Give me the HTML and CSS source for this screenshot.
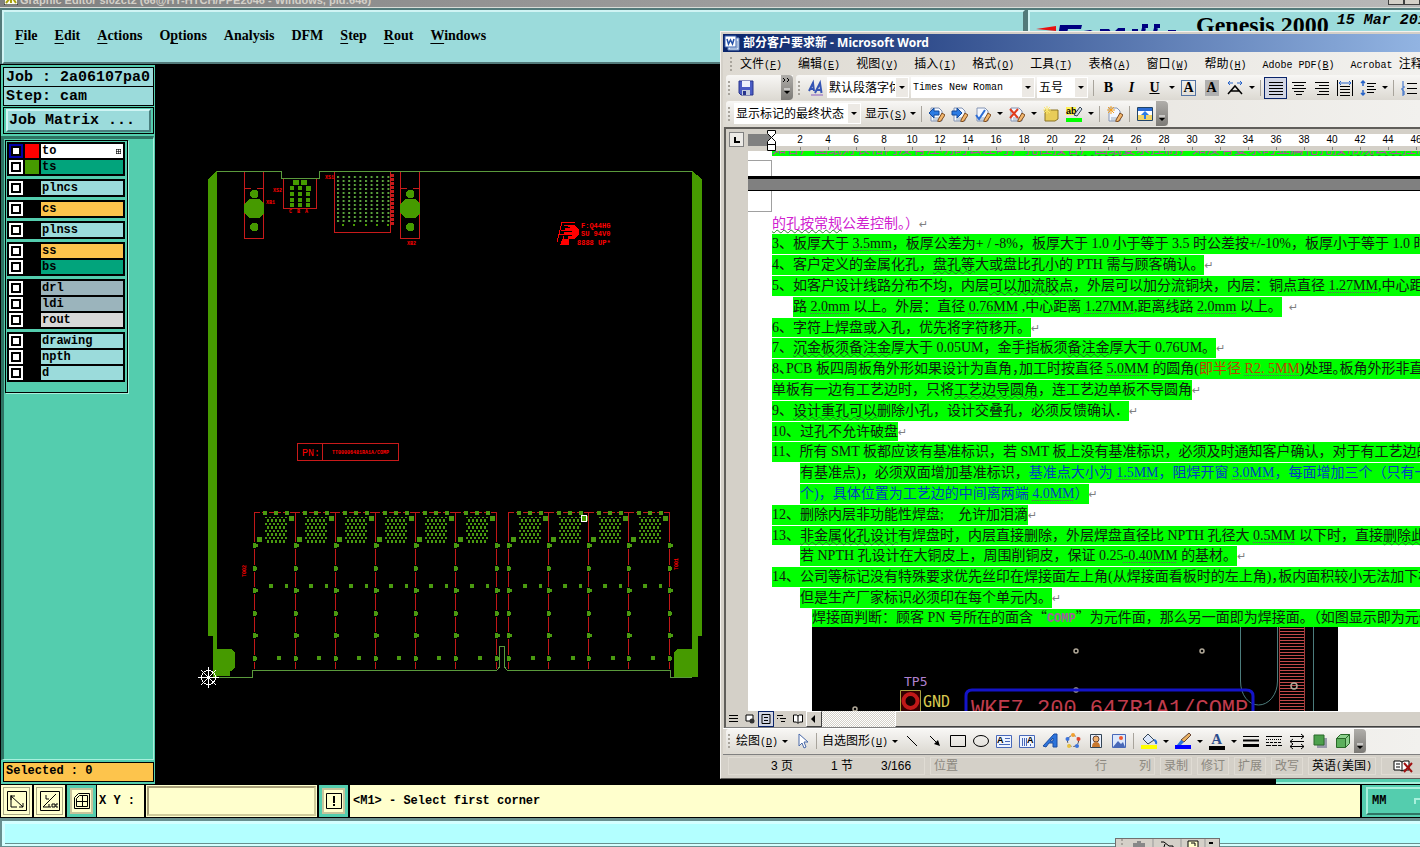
FILE: index.html
```
<!DOCTYPE html>
<html lang="zh-CN">
<head>
  <meta charset="UTF-8">
  <title>Graphic Editor</title>
  <link rel="stylesheet" href="styles.css">
</head>
<body>
  <!-- shared icon shapes -->
  <svg class="defs" aria-hidden="true">
    <defs>
      <symbol id="i-page" viewBox="0 0 16 16">
        <path d="M2 2h8l3 3v10H2z" fill="#f4f8ff" stroke="#8494b4"/>
        <path d="M4 12h6M4 14h6" stroke="#9ab"/>
        <path d="M9 14l4-7 3 2-4 6-3 1z" fill="#f2b66c" stroke="#7b4a1e"/>
      </symbol>
      <symbol id="i-lines" viewBox="0 0 16 16">
        <path d="M1 2.5h14M1 5.5h14M1 8.5h14M1 11.5h14M1 14.5h14" stroke="#000"/>
      </symbol>
      <symbol id="rail" viewBox="0 0 8 160" overflow="visible">
        <path d="M4 0v157" stroke="#c01818"/>
        <path d="M4 30v7M4 53v7M4 75v7M4 98v7M4 120v7M4 143v7" stroke="#000" stroke-width="3"/>
        <path d="M2 33.500h5M2 56.500h4M2 78.500h5M2 101.500h4M2 123.500h5M2 146.500h4" stroke="#4a9a10" stroke-width="3"/>
        <path d="M4 31v5M4 54v5M4 76v5M4 99v5M4 121v5M4 144v5" stroke="#4a9a10" stroke-width="3"/>
      </symbol>
      <pattern id="balls" width="4" height="7" patternUnits="userSpaceOnUse">
        <path d="M0 0h2v3H0zM2 4h2v2H2z" fill="#4a9a10"/>
      </pattern>
      <symbol id="cell" viewBox="0 0 40 160" overflow="visible">
        <path d="M0 .5h40" stroke="#c01818" stroke-dasharray="5 2"/>
        <path d="M8 1h4M19 1h4M30 1h4" stroke="#4a9a10" stroke-width="4"/>
        <path d="M10 5h22v27H10z" fill="url(#balls)"/>
        <path d="M34 6.500h5M2 27h5" stroke="#4a9a10" stroke-width="5"/>
        <path d="M14 74h4M30 74h3M22 146h4" stroke="#4a9a10" stroke-width="4"/>
      </symbol>
      <pattern id="pins" x="337" y="176" width="5.6" height="4" patternUnits="userSpaceOnUse">
        <path d="M0 0h2v2H0z" fill="#5aa33c"/>
      </pattern>
      <pattern id="hatch" width="4" height="3" patternUnits="userSpaceOnUse">
        <path d="M0 0h4v1H0z" fill="#c04a4a"/>
      </pattern>
    </defs>
  </svg>

  <div class="titlebar">
    <svg class="app-icon" viewBox="0 0 14 14"><path d="M0 0h14v14H0z" fill="#fffff0" stroke="#000"/><path d="M2 12l5-6-4-3M12 12L8 6l4-4M7 7v5" stroke="#a8a010" stroke-width="2" fill="none"/></svg>
    <span class="titlebar-text">Graphic Editor sl02ct2 (66@HY-HTCH/PPE2046 - Windows, pid:646)</span>
    <div class="win-btns"><button aria-label="Minimize"></button><button aria-label="Maximize"></button></div>
  </div>

  <div class="top">
    <nav class="menubar">
      <a href="#"><u>F</u>ile</a>
      <a href="#"><u>E</u>dit</a>
      <a href="#"><u>A</u>ctions</a>
      <a href="#">O<u>p</u>tions</a>
      <a href="#">Analysis</a>
      <a href="#">DFM</a>
      <a href="#"><u>S</u>tep</a>
      <a href="#"><u>R</u>out</a>
      <a href="#"><u>W</u>indows</a>
    </nav>
    <div class="brand">
      <svg class="brand-logo" viewBox="0 0 150 24">
        <path d="M0 8l20-3v5z" fill="#e81010"/>
        <path d="M24 4h22l-1 4H32l-1 4h11l-1 4H30l-2 5h-7z" fill="#000080"/>
        <path d="M48 12l6-1 5 2M64 10h8l2 3M80 12l3-3h6M96 10h4v9M108 7l-3 12M120 7l-3 12M106 5h6M118 5h6M132 11h8" stroke="#000080" stroke-width="4" fill="none"/>
      </svg>
      <span class="brand-name">Genesis 2000</span>
      <span class="brand-date">15 Mar 2016</span>
    </div>
  </div>

  <div class="workspace">
    <aside class="sidebar">
      <div class="job-box">Job : 2a06107pa0</div>
      <div class="job-box last">Step: cam</div>
      <div class="matrix-frame"><button class="matrix-btn">Job Matrix ...</button></div>
      <div class="layer-area">
        <div class="layer-panel">
          <div class="layer-group">
            <div class="layer active"><input type="checkbox" id="l-to"><i class="swatch red"></i><label for="l-to">to<svg class="grid-mark" viewBox="0 0 5 5"><path d="M0 .5h5M0 2.5h5M0 4.5h5M.5 0v5M2.5 0v5M4.5 0v5" stroke="#000" stroke-width=".6"/></svg></label></div>
            <div class="layer mask"><input type="checkbox" id="l-ts"><i class="swatch green"></i><label for="l-ts">ts</label></div>
          </div>
          <div class="layer-group">
            <div class="layer"><input type="checkbox" id="l-plncs"><i class="swatch"></i><label for="l-plncs">plncs</label></div>
          </div>
          <div class="layer-group">
            <div class="layer signal"><input type="checkbox" id="l-cs"><i class="swatch"></i><label for="l-cs">cs</label></div>
          </div>
          <div class="layer-group">
            <div class="layer"><input type="checkbox" id="l-plnss"><i class="swatch"></i><label for="l-plnss">plnss</label></div>
          </div>
          <div class="layer-group">
            <div class="layer signal"><input type="checkbox" id="l-ss"><i class="swatch"></i><label for="l-ss">ss</label></div>
            <div class="layer mask"><input type="checkbox" id="l-bs"><i class="swatch"></i><label for="l-bs">bs</label></div>
          </div>
          <div class="layer-group">
            <div class="layer drill"><input type="checkbox" id="l-drl"><i class="swatch"></i><label for="l-drl">drl</label></div>
            <div class="layer drill"><input type="checkbox" id="l-ldi"><i class="swatch"></i><label for="l-ldi">ldi</label></div>
            <div class="layer rout"><input type="checkbox" id="l-rout"><i class="swatch"></i><label for="l-rout">rout</label></div>
          </div>
          <div class="layer-group">
            <div class="layer"><input type="checkbox" id="l-drawing"><i class="swatch"></i><label for="l-drawing">drawing</label></div>
            <div class="layer"><input type="checkbox" id="l-npth"><i class="swatch"></i><label for="l-npth">npth</label></div>
            <div class="layer"><input type="checkbox" id="l-d"><i class="swatch"></i><label for="l-d">d</label></div>
          </div>
        </div>
      </div>
      <div class="selected">Selected : 0</div>
    </aside>

    <main class="canvas">
      <svg class="board" viewBox="155 64 565 720" shape-rendering="crispEdges">
        <!-- board outline -->
        <path d="M217 171.500H281.500V178.500H319.500V171.500H692" fill="none" stroke="#5a9a3c"/>
        <path d="M208 179l9-8V677h-4V636h-5zM702 179l-10-8V677h6V636h4z" fill="#469a00"/>
        <path d="M217 649h14l4 4v14l-4 4h-1v5h-13zM677 649h21v22l-5 6h-19v-25z" fill="#469a00"/>
        <path d="M208 677.500H252.500V670.500H496.500L499.500 667V646.500H504.500V667L507.500 670.500H670.500V677.500H692" fill="none" stroke="#5a9a3c"/>

        <!-- side connectors -->
        <g fill="none" stroke="#c81a1a">
          <path d="M244.500 172v66.500h19V172M244 188.500h7M257 188.500h7"/>
          <path d="M400.500 172v66.500h19V172M400 188.500h7M413 188.500h7"/>
          <path d="M283.500 179v29.500h33V179M334.500 172v60.500h56V172"/>
          <path d="M297.500 443.500h101v17h-101zM322.500 443v18"/>
          <path d="M392 174v52" stroke-width="3" stroke-dasharray="3 1"/>
        </g>
        <g fill="#469a00">
          <path d="M250 192l2-2h4l2 2v4l-2 2h-4l-2-2zM250 225l2-2h4l2 2v4l-2 2h-4l-2-2z"/>
          <path d="M249 199h10l5 5v9l-5 5h-10l-5-5v-9z"/>
          <path d="M406 192l2-2h4l2 2v4l-2 2h-4l-2-2zM406 225l2-2h4l2 2v4l-2 2h-4l-2-2zM405 199h10l5 5v9l-5 5h-10l-5-5v-9z"/>
          <path d="M293 180h6v5h-6zM301 180h6v5h-6zM290 186h4v4h-4zM298 186h4v4h-4zM306 186h5v5h-5zM290 192h4v4h-4zM298 192h4v4h-4zM306 192h4v4h-4zM290 198h4v4h-4zM298 198h4v4h-4zM306 198h4v4h-4zM290 203h4v4h-4zM298 203h4v4h-4zM306 203h4v4h-4z"/>
          <path d="M337 176h55v46h-55z" fill="url(#pins)"/>
          <path d="M342 224h2v2h-2zM353 224h2v2h-2zM365 224h2v2h-2zM376 224h2v2h-2zM387 224h2v2h-2z"/>
        </g>
        <g class="silk">
          <text x="273" y="192">XS2</text><text x="266" y="204">XB1</text><text x="325" y="179">XS1</text><text x="407" y="245">XB2</text>
          <text x="289" y="213">C</text><text x="297" y="213">B</text><text x="305" y="213">A</text>
          <text x="581" y="228" class="b">F:Q44HG</text><text x="581" y="236" class="b">SU 94V0</text><text x="577" y="245" class="b">8888 UP*</text>
          <text x="302" y="456" class="pn">PN:</text><text x="332" y="454">TT00006481RA1A/COMP</text>
          <text transform="translate(246 577) rotate(-90)">T002</text><text transform="translate(678 570) rotate(-90)">T001</text>
        </g>
        <path d="M557 242l5-20h13M564 225h9l5 4v5l-5 4h-5v6h-7l3-8M561 230h12M559 234h14" fill="none" stroke="#f00"/>
        <path d="M566 225h8l5 5v4l-5 5h-6v-3h4v-2h-8v-2h8v-2h-7v-2h6zM562 239h6v5h-7z" fill="#f00"/>

        <!-- contact cells -->
        <use href="#cell" x="255" y="512" width="40" height="160"/><use href="#cell" x="295" y="512" width="40" height="160"/><use href="#cell" x="335" y="512" width="40" height="160"/><use href="#cell" x="375" y="512" width="40" height="160"/><use href="#cell" x="415" y="512" width="40" height="160"/><use href="#cell" x="456" y="512" width="40" height="160"/>
        <use href="#cell" x="509" y="512" width="40" height="160"/><use href="#cell" x="549" y="512" width="40" height="160"/><use href="#cell" x="589" y="512" width="40" height="160"/><use href="#cell" x="629" y="512" width="40" height="160"/>
        <use href="#rail" x="250.500" y="512" width="8" height="160"/><use href="#rail" x="291.500" y="512" width="8" height="160"/><use href="#rail" x="331.500" y="512" width="8" height="160"/><use href="#rail" x="371.500" y="512" width="8" height="160"/><use href="#rail" x="411.500" y="512" width="8" height="160"/><use href="#rail" x="451.500" y="512" width="8" height="160"/><use href="#rail" x="492.500" y="512" width="8" height="160"/>
        <use href="#rail" x="504.500" y="512" width="8" height="160"/><use href="#rail" x="544.500" y="512" width="8" height="160"/><use href="#rail" x="584.500" y="512" width="8" height="160"/><use href="#rail" x="624.500" y="512" width="8" height="160"/><use href="#rail" x="665.500" y="512" width="8" height="160"/>
        <path d="M581.500 515.500h5v6h-5z" fill="#469a00" stroke="#fff"/>

        <!-- origin marker -->
        <g stroke="#fff" fill="none"><circle cx="208.500" cy="677.500" r="7"/><path d="M198 677.500h21M208.500 667v21M201 670l15 15M216 670l-15 15"/></g>
      </svg>
      <div class="coord-panel"></div>
    </main>
  </div>

  <div class="command">
    <button class="cmd-btn" aria-label="Zoom"><svg viewBox="0 0 20 20"><path d="M.5.5h19v19H.5zM4 5l12 11M4 9V5h4M12 16h4v-4M4 4v12h6" fill="none" stroke="#000"/></svg></button>
    <button class="cmd-btn" aria-label="Angle"><svg viewBox="0 0 20 20"><path d="M.5.5h19v19H.5zM3 16L16 3M3 16h8M6 4v4h3M9 13v3M12 13h3v3h-3zM18 13h-2v3h2" fill="none" stroke="#000"/></svg></button>
    <button class="cmd-btn framed" aria-label="Grid"><svg viewBox="0 0 16 16"><path d="M.5 4.500l4-4h11v15H.5zM2.500 5.500l3-3h8v11h-11zM8.500 2v12M2 8.500h12" fill="none" stroke="#000"/></svg></button>
    <label class="xy" for="xy">X Y :</label>
    <input class="xy-input" id="xy" type="text">
    <button class="cmd-btn framed" aria-label="Info"><svg viewBox="0 0 16 16"><path d="M.5.5h15v15H.5z" fill="none" stroke="#000"/><path d="M8 3v7M8 11v2" stroke="#000" stroke-width="2"/></svg></button>
    <div class="message">&lt;M1&gt; - Select first corner</div>
    <div class="units"><button class="unit-btn">MM <i></i></button></div>
  </div>
  <div class="footer"><div class="footer-inner"></div></div>
  <div class="langbar"><i class="grip"></i><svg viewBox="0 0 90 9"><path d="M8 4h12v5H8zM12 2h4v2h-4z" fill="#888"/><path d="M28 0v9M56 0v9M80 0v9" stroke="#999"/><path d="M36 3h3l5 4h4v2M40 5l-1 3" stroke="#000" fill="none"/><path d="M63 2h10v7H63z" fill="#ffc" stroke="#000"/><path d="M66 4h4v3" stroke="#000" fill="none"/><path d="M84 4h4" stroke="#000" stroke-width="2"/></svg></div>

  <section class="word">
    <div class="word-title">
      <svg class="word-icon" viewBox="0 0 16 16"><path d="M4 3h11v12H4z" fill="#dce8f8" stroke="#6c8cc0"/><path d="M1 1h11v11H1z" fill="#fff" stroke="#3a62b0"/><path d="M3 4l1.500 5L6.500 5 8.500 9 10 4" fill="none" stroke="#2450a8" stroke-width="1.500"/><path d="M13 6v7M6 13h7" stroke="#6c8cc0"/></svg>
      部分客户要求新 - Microsoft Word
    </div>
    <nav class="word-menu">
      <i class="grip"></i>
      <a href="#">文件<span>(<u>F</u>)</span></a><a href="#">编辑<span>(<u>E</u>)</span></a><a href="#">视图<span>(<u>V</u>)</span></a><a href="#">插入<span>(<u>I</u>)</span></a><a href="#">格式<span>(<u>O</u>)</span></a><a href="#">工具<span>(<u>T</u>)</span></a><a href="#">表格<span>(<u>A</u>)</span></a><a href="#">窗口<span>(<u>W</u>)</span></a><a href="#">帮助<span>(<u>H</u>)</span></a><a href="#"><span>Adobe PDF(<u>B</u>)</span></a><a href="#"><span>Acrobat </span>注释<span>(<u>C</u>)</span></a>
    </nav>

    <div class="tools">
      <div class="segment">
        <i class="grip"></i>
        <button class="tb" aria-label="保存"><svg viewBox="0 0 16 16"><path d="M1 1h14v14H3l-2-2z" fill="#4a5cc4" stroke="#28348c"/><path d="M4 1h8v6H4z" fill="#eef2fc"/><path d="M4 10h8v5H4z" fill="#c4ccdc"/><path d="M5 11h3v4H5z" fill="#28348c"/></svg></button>
        <span class="blank"></span>
        <button class="cap" aria-label="更多"><svg viewBox="0 0 10 22"><path d="M1 3l2 2-2 2M5 3l2 2-2 2" stroke="#000" fill="none"/><path d="M2 14h6" stroke="#fff"/><path d="M2 16h6l-3 3z"/></svg></button>
      </div>
      <div class="segment grow">
        <i class="grip"></i>
        <button class="tb" aria-label="样式"><svg viewBox="0 0 16 16"><path d="M1 11L5 3l1 8M2 9h4M7 13l5-10 1.500 10M9 10h4" stroke="#3454b4" stroke-width="2" fill="none"/><path d="M3 15h12" stroke="#8c5cc0"/></svg></button>
        <select class="combo w-style" aria-label="样式名"><option>默认段落字体</option></select>
        <select class="combo w-font" aria-label="字体"><option>Times New Roman</option></select>
        <select class="combo w-size" aria-label="字号"><option>五号</option></select>
        <i class="sep"></i>
        <button class="tb letter"><b>B</b></button>
        <button class="tb letter"><em>I</em></button>
        <button class="tb letter"><u>U</u></button><button class="drop" aria-label="下划线"></button>
        <button class="tb letter"><span class="boxed">A</span></button>
        <button class="tb letter"><span class="shaded">A</span></button>
        <button class="tb" aria-label="缩放"><svg viewBox="0 0 16 16"><path d="M1 14l7-8 7 8M4 11h8" stroke="#000" stroke-width="1.500" fill="none"/><path d="M1 3h5M3 1L1 3l2 2M10 3h5M13 1l2 2-2 2" stroke="#2864c8" fill="none"/></svg></button><button class="drop" aria-label="缩放比例"></button>
        <i class="sep"></i>
        <button class="tb on" aria-label="两端对齐"><svg viewBox="0 0 16 16"><use href="#i-lines"/></svg></button>
        <button class="tb" aria-label="居中"><svg viewBox="0 0 16 16"><path d="M1 2.500h14M3 5.500h10M1 8.500h14M3 11.500h10M5 14.500h6" stroke="#000"/></svg></button>
        <button class="tb" aria-label="右对齐"><svg viewBox="0 0 16 16"><path d="M1 2.500h14M5 5.500h10M1 8.500h14M5 11.500h10M3 14.500h12" stroke="#000"/></svg></button>
        <button class="tb" aria-label="分散对齐"><svg viewBox="0 0 16 16"><path d="M.5 0v16M15.500 0v16M3 6.500h10M3 9.500h10M3 12.500h10M3 15.500h10" stroke="#000"/><path d="M2 3h12M4 1L2 3l2 2M12 1l2 2-2 2" stroke="#2864c8" fill="none"/></svg></button>
        <button class="tb" aria-label="行距"><svg viewBox="0 0 16 16"><path d="M7 3.500h9M7 6.500h7M7 9.500h9M7 12.500h7" stroke="#000"/><path d="M3 1v5M3 10v5M1 3l2-2 2 2M1 13l2 2 2-2" stroke="#2864c8" fill="none" stroke-width="1.500"/></svg></button><button class="drop" aria-label="行距值"></button>
        <i class="sep"></i>
        <button class="tb" aria-label="编号"><svg viewBox="0 0 16 16"><path d="M6 3.500h10M6 8.500h10M6 13.500h10" stroke="#000"/><path d="M2 1v4M1 6h2v2H1v2h2M1 11h2v4H1M1 13h2" stroke="#2864c8" fill="none"/></svg></button>
      </div>
    </div>

    <div class="tools">
      <div class="segment">
        <i class="grip"></i>
        <select class="combo w-review" aria-label="审阅"><option>显示标记的最终状态</option></select>
        <button class="text-btn">显示<span>(<u>S</u>)</span></button><button class="drop" aria-label="显示选项"></button>
        <i class="sep"></i>
        <button class="tb" aria-label="前一处"><svg viewBox="0 0 16 16"><use href="#i-page"/><path d="M0 7l5-5v3h5v4H5v3z" fill="#2c7ce4" stroke="#134a9c"/></svg></button>
        <button class="tb" aria-label="后一处"><svg viewBox="0 0 16 16"><use href="#i-page"/><path d="M10 7L5 2v3H0v4h5v3z" fill="#2c7ce4" stroke="#134a9c"/></svg></button>
        <button class="tb" aria-label="接受"><svg viewBox="0 0 16 16"><use href="#i-page"/><path d="M1 9l3 4 6-9" stroke="#2c6cd4" stroke-width="2" fill="none"/></svg></button><button class="drop" aria-label="接受选项"></button>
        <button class="tb" aria-label="拒绝"><svg viewBox="0 0 16 16"><use href="#i-page"/><path d="M1 3l8 9M9 3l-8 9" stroke="#e03c1c" stroke-width="2" fill="none"/></svg></button><button class="drop" aria-label="拒绝选项"></button>
        <button class="tb" aria-label="批注"><svg viewBox="0 0 16 16"><path d="M2 4h13v9l-3 2H2z" fill="#e8cc58" stroke="#8c7424"/><path d="M4 0v8M0 4h8M1 1l6 6M7 1L1 7" stroke="#fce870"/></svg></button>
        <button class="tb" aria-label="突出显示"><svg viewBox="0 0 16 16"><path d="M0 1h10v8H0z" fill="#fff250"/><text x="0" y="8" class="ico-text">ab</text><path d="M8 9l6-8 2 2-5 7z" fill="#d8e0ec" stroke="#345"/><path d="M0 12h16v4H0z" fill="#0f0"/></svg></button><button class="drop" aria-label="颜色"></button>
        <i class="sep"></i>
        <button class="tb" aria-label="修订"><svg viewBox="0 0 16 16"><use href="#i-page"/><path d="M4 0v8M0 4h8M1 1l6 6M7 1L1 7" stroke="#f4a020"/></svg></button>
        <i class="sep"></i>
        <button class="tb" aria-label="审阅窗格"><svg viewBox="0 0 16 16"><path d="M.5 1.500h15v13H.5z" fill="#fff" stroke="#246"/><path d="M1 2h14v3H1z" fill="#2c6cd4"/><path d="M1 9h14v5H1z" fill="#f0d468"/><path d="M8 5l4 4H9v4H7V9H4z" fill="#2c7ce4"/></svg></button>
        <button class="cap" aria-label="更多"><svg viewBox="0 0 10 22"><path d="M2 15h6" stroke="#fff"/><path d="M2 17h6l-3 3z"/></svg></button>
      </div>
    </div>

    <div class="ruler">
      <span class="tab-stop"><svg viewBox="0 0 8 8"><path d="M2 1v5h5" fill="none" stroke="#000" stroke-width="2"/></svg></span>
      <div class="ruler-scale">
        <span class="ruler-margin"></span>
        <svg class="indent" viewBox="0 0 9 21"><path d="M.5.500h8v3l-4 4-4-4zM.5 14.500v-3l4-4 4 4v3zM.5 14.500h8v6h-8z" fill="#fff" stroke="#000"/></svg>
        <ol class="ticks"><li>2</li><li>4</li><li>6</li><li>8</li><li>10</li><li>12</li><li>14</li><li>16</li><li>18</li><li>20</li><li>22</li><li>24</li><li>26</li><li>28</li><li>30</li><li>32</li><li>34</li><li>36</li><li>38</li><li>40</li><li>42</li><li>44</li><li>46</li></ol>
      </div>
    </div>

    <div class="doc">
      <div class="prev-line"><span>如客户图纸对表格内没有注明的公差时，孔径按<s>客户图纸</s>要求控制，如没有要求的金属化孔按<s>常规公差</s>控制，±0.076mm 非金属化的孔按±0.05</span></div>
      <div class="page-end"></div>
      <div class="page-gap"></div>
      <div class="page-start"></div>
      <div class="lines">
        <p class="line pink"><s>的孔按常规</s>公差控制。）<i class="ret">↵</i></p>
        <p class="line"><mark>3、板厚大于 <b>3.5mm</b>，板厚公差为+ / -8%，板厚大于 1.0 小于等于 3.5 时公差按+/-10%，板厚小于等于 1.0 时</mark></p>
        <p class="line"><mark>4、客户定义的金属化孔，<s>盘孔等</s>大或盘比孔小的 PTH 需与顾客确认。</mark><i class="ret">↵</i></p>
        <p class="line"><mark>5、如客户设计线路分布不均，内层<s>可以加流胶</s>点，外层可以加分流铜块，内层：铜点直径 <b>1.27MM</b>,中心距离</mark></p>
        <p class="line in-1"><mark>路 <b>2.0mm</b> 以上。外层：直径 <b>0.76MM</b> ,中心距离 <b>1.27MM</b>,距离线路 <b>2.0mm</b> 以上。</mark>&nbsp; <i class="ret">↵</i></p>
        <p class="line"><mark>6、字符上焊盘或入孔，优先将字符移开。 </mark><i class="ret">↵</i></p>
        <p class="line"><mark>7、<s>沉金板须备注金</s>厚大于 0.05UM，金手指板须<s>备注金</s>厚大于 0.76UM。 </mark><i class="ret">↵</i></p>
        <p class="line kern"><mark>8、PCB 板四周板角外形如果设计为直角，加工时按直径 <b>5.0MM</b> 的圆角(<span class="red">即半径 <b>R2. 5MM</b></span>)处理。板角外形非直</mark></p>
        <p class="line"><mark>单板有一边有工艺边时，只将<s>工艺边导圆角</s>，连工艺边单板不导圆角</mark><i class="ret">↵</i></p>
        <p class="line"><mark>9、<s>设计重孔可以</s>删除小孔，设计交叠孔，必须反馈确认．</mark><i class="ret">↵</i></p>
        <p class="line"><mark>10、过孔不允许破盘</mark><i class="ret">↵</i></p>
        <p class="line"><mark>11、所有 SMT 板都应该有基准标识，若 SMT 板上没有基准标识，必须及时通知客户确认，对于有工艺边的</mark></p>
        <p class="line in-2"><mark>有基准点)，必须双面增加基准标识，<span class="blue">基准点大小为 <b>1.5MM</b>，阻焊开窗 <b>3.0MM</b>，每面增加三个（只有一</span></mark></p>
        <p class="line in-2"><mark><span class="blue">个)，具体位置为工艺边的中间离两端 <b>4.0MM</b>）</span></mark><i class="ret">↵</i></p>
        <p class="line"><mark>12、删除内层非功能性焊盘;&nbsp;&nbsp;&nbsp; 允许加泪滴</mark><i class="ret">↵</i></p>
        <p class="line"><mark>13、<s>非金属化孔设计</s>有焊盘时，内层直接删除，外层焊盘直径比 NPTH 孔径大 <b>0.5MM</b> 以下时，直接<s>删除此</s></mark></p>
        <p class="line in-2"><mark>若 NPTH 孔设计在大铜皮上，周围削铜皮，保证 0.25<b>-0.40MM</b> 的基材。</mark><i class="ret">↵</i></p>
        <p class="line"><mark>14、公司等标记没有特殊要求优先丝印在焊接面左上角(从焊接面看板时的左上角)<span class="kern">，</span>板内面积较小无法加下标</mark></p>
        <p class="line in-2"><mark>但是生产厂家标识必须印在每个单元内。</mark><i class="ret">↵</i></p>
        <p class="line in-3"><mark>焊接面判断：顾客 PN 号所在的面含<span class="cjk">“</span><span class="comp">COMP</span><span class="cjk">”</span>为元件面，那么另一面即为焊接面。（如图显示即为元件</mark></p>
        <svg class="figure" viewBox="812 626 526 85">
          <path d="M812 626h526v85H812z"/>
          <path d="M1240.500 626v54c0 14 8 24 18 24s19-10 19-24v-54M1313.500 626v85" fill="none" stroke="#4c7c7c"/>
          <path d="M1279 626h26v85h-26z" fill="url(#hatch)"/><path d="M1279.500 626v85M1304.500 626v85" stroke="#a03c3c"/>
          <g fill="none" stroke="#b0a898" stroke-width="1.500"><circle cx="1076" cy="650" r="2"/><circle cx="1202" cy="650" r="2"/><circle cx="855" cy="708" r="2"/><circle cx="1294" cy="685" r="3"/><circle cx="1076" cy="689" r="2"/></g>
          <text x="904" y="685" class="f-tp">TP5</text>
          <path d="M900.500 689.500h20v24h-20z" fill="#300" stroke="#a8a040"/><circle cx="910.500" cy="700" r="7" fill="#100" stroke="#c01818" stroke-width="4"/>
          <text x="923" y="706" class="f-gnd">GND</text>
          <path d="M966 715V695q0-6 6-6H1246q7 0 7 6v20" fill="none" stroke="#1414c8" stroke-width="3"/>
          <text x="971" y="714" class="f-pn">WKE7 200 647R1A1/COMP</text>
        </svg>
      </div>
    </div>

    <div class="hscroll">
      <button aria-label="普通视图"><svg viewBox="0 0 12 12"><path d="M1 2.500h9M1 5.500h9M1 8.500h9" stroke="#000"/></svg></button>
      <button aria-label="Web 版式"><svg viewBox="0 0 12 12"><path d="M2 2h7v6H2z" fill="#fff" stroke="#000"/><circle cx="8" cy="8" r="2.500" fill="#333"/></svg></button>
      <button class="on" aria-label="页面视图"><svg viewBox="0 0 12 12"><path d="M2 1.500h8v9H2zM4 4.500h4M4 7.500h4" fill="none" stroke="#000"/></svg></button>
      <button aria-label="大纲视图"><svg viewBox="0 0 12 12"><path d="M1 2.500h6M4 5.500h6M1 5.500h1M5 8.500h4" stroke="#000"/></svg></button>
      <button aria-label="阅读版式"><svg viewBox="0 0 12 12"><path d="M1.500 2h3L6 3l1.500-1h3v7h-3L6 10.500 4.500 9h-3zM6 3v7" fill="#fff" stroke="#000"/></svg></button>
      <button class="raised" aria-label="向左"><svg viewBox="0 0 12 12"><path d="M7 2v8L3 6z"/></svg></button>
      <span class="track"></span><span class="thumb"></span>
    </div>

    <div class="tools draw">
      <div class="segment">
        <i class="grip"></i>
        <button class="text-btn">绘图<span>(<u>D</u>)</span></button><button class="drop" aria-label="绘图菜单"></button>
        <button class="tb" aria-label="选择对象"><svg viewBox="0 0 16 16"><path d="M5 1v12l3-3 2 5 2-1-2-5h4z" fill="#fff" stroke="#4868a8"/></svg></button>
        <i class="sep"></i>
        <button class="text-btn">自选图形<span>(<u>U</u>)</span></button><button class="drop" aria-label="自选图形菜单"></button>
        <button class="tb" aria-label="直线"><svg viewBox="0 0 16 16"><path d="M3 3l10 10" stroke="#000"/></svg></button>
        <button class="tb" aria-label="箭头"><svg viewBox="0 0 16 16"><path d="M3 3l7 7" stroke="#000"/><path d="M13 13l-6-2 4-4z"/></svg></button>
        <button class="tb" aria-label="矩形"><svg viewBox="0 0 16 16"><path d="M.5 2.500h15v11H.5z" fill="none" stroke="#000"/></svg></button>
        <button class="tb" aria-label="椭圆"><svg viewBox="0 0 16 16"><ellipse cx="8" cy="8" rx="7.500" ry="5.500" fill="none" stroke="#000"/></svg></button>
        <button class="tb" aria-label="文本框"><svg viewBox="0 0 16 16"><path d="M.5 2.500h15v12H.5z" fill="#eef4ff" stroke="#4868b8"/><text x="1" y="10" class="ico-text">A</text><path d="M9 5.500h5M9 8.500h5M3 11.500h11" stroke="#4868b8"/></svg></button>
        <button class="tb" aria-label="竖排文本框"><svg viewBox="0 0 16 16"><path d="M.5 2.500h15v12H.5z" fill="#eef4ff" stroke="#4868b8"/><text x="8" y="10" class="ico-text">A</text><path d="M3.500 5v8M5.500 5v8M7.500 5v8M11.500 11v2" stroke="#4868b8"/></svg></button>
        <button class="tb" aria-label="艺术字"><svg viewBox="0 0 16 16"><path d="M1 13L12 1h3v13h-4v-4H7l-3 4zM8 8h3V5z" fill="#2c74dc" fill-rule="evenodd" stroke="#1c4ca0"/></svg></button>
        <button class="tb" aria-label="图示"><svg viewBox="0 0 16 16"><circle cx="8" cy="8" r="5.500" fill="none" stroke="#445" stroke-dasharray="3 2"/><circle cx="8" cy="2" r="2" fill="#f0a030"/><circle cx="2.500" cy="6" r="2" fill="#3c74dc"/><circle cx="13.500" cy="6" r="2" fill="#e04830"/><circle cx="4" cy="13" r="2" fill="#e8c040"/><circle cx="12" cy="13" r="2" fill="#3c74dc"/></svg></button>
        <button class="tb" aria-label="剪贴画"><svg viewBox="0 0 16 16"><path d="M2.500 1.500h11v13h-11z" fill="#e8f0ff" stroke="#345"/><circle cx="8" cy="6" r="3" fill="#f0b070" stroke="#643"/><path d="M4 14q0-5 4-5t4 5z" fill="#c87830"/></svg></button>
        <button class="tb" aria-label="图片"><svg viewBox="0 0 16 16"><path d="M1.500 1.500h13v13h-13z" fill="#dce8fc" stroke="#4868b8"/><path d="M2 14l5-6 3 3 2-2 2 5z" fill="#4868b8"/><circle cx="10" cy="5" r="2" fill="#f05830"/></svg></button>
        <i class="sep"></i>
        <button class="tb" aria-label="填充颜色"><svg viewBox="0 0 16 16"><path d="M7 1l6 6-6 4-5-5z" fill="#dce8fc" stroke="#345"/><path d="M13 7q3 1 2 4" stroke="#2c74dc" stroke-width="2" fill="none"/><path d="M0 12h16v4H0z" fill="#ff0"/></svg></button><button class="drop" aria-label="填充选项"></button>
        <button class="tb" aria-label="线条颜色"><svg viewBox="0 0 16 16"><path d="M14 0l2 2-7 7-3-2z" fill="#e8b060" stroke="#643"/><path d="M6 7l3 2-3 3H2z" fill="#2c74dc"/><path d="M0 12h16v4H0z" fill="#00f"/></svg></button><button class="drop" aria-label="线条选项"></button>
        <button class="tb fontcolor"><span>A</span></button><button class="drop" aria-label="字体颜色"></button>
        <button class="tb" aria-label="线型"><svg viewBox="0 0 16 16"><path d="M0 3.500h16" stroke="#000"/><path d="M0 7.500h16" stroke="#000" stroke-width="2"/><path d="M0 12.500h16" stroke="#000" stroke-width="3"/></svg></button>
        <button class="tb" aria-label="虚线"><svg viewBox="0 0 16 16"><path d="M0 3.500h16" stroke="#000"/><path d="M0 6.500h16" stroke="#000" stroke-dasharray="1 1"/><path d="M0 9.500h16" stroke="#000" stroke-dasharray="3 1"/><path d="M0 12.500h16" stroke="#000" stroke-dasharray="5 1"/></svg></button>
        <button class="tb" aria-label="箭头样式"><svg viewBox="0 0 16 16"><path d="M1 3.500h14M12 1l3 2.500L12 6M15 8.500H1M4 6L1 8.500 4 11M1 13.500h14M12 11l3 2.500-3 2.500M4 11l-3 2.500L4 16" fill="none" stroke="#000"/></svg></button>
        <button class="tb" aria-label="阴影"><svg viewBox="0 0 16 16"><path d="M5 5h10v10H5z" fill="#99a"/><path d="M2 2h10v10H2z" fill="#4ca04c" stroke="#286828"/></svg></button>
        <button class="tb" aria-label="三维"><svg viewBox="0 0 16 16"><path d="M1.500 5.500h9v9h-9z" fill="#5cb05c" stroke="#286828"/><path d="M1.500 5.500l4-4h9l-4 4zM14.500 1.500v9l-4 4v-9z" fill="#8cd08c" stroke="#286828"/></svg></button>
        <button class="cap" aria-label="更多"><svg viewBox="0 0 10 22"><path d="M2 15h6" stroke="#fff"/><path d="M2 17h6l-3 3z"/></svg></button>
      </div>
    </div>

    <div class="status">
      <div class="cell pages"><span>3 页</span><span>1 节</span><span>3/166</span></div>
      <div class="cell place off"><span>位置</span><span class="row">行</span><span>列</span></div>
      <div class="cell off">录制</div><div class="cell off">修订</div><div class="cell off">扩展</div><div class="cell off">改写</div>
      <div class="cell">英语<span class="mono">(</span>美国<span class="mono">)</span></div>
      <div class="cell book"><svg viewBox="0 0 20 14"><path d="M1 2h6l2 1 2-1h5v9h-5l-2 1-2-1H1zM9 3v9M3 5h4M3 8h4" fill="#fff" stroke="#000"/><path d="M11 4l8 9M19 4l-8 9" stroke="#a01010" stroke-width="2"/></svg></div>
      <div class="cell rest"></div>
    </div>
  </section>
</body>
</html>
```
FILE: styles.css
```
* {
  box-sizing: border-box;
}

body {
  margin: 0;
  height: 100vh;
  display: flex;
  flex-direction: column;
  overflow: hidden;
  position: relative;
  background: #000;
  color: #000;
  font-family: "Liberation Mono", monospace;
  font-size: 12px;
}

button, select, input {
  font: inherit;
  color: inherit;
  border: 0;
  padding: 0;
  margin: 0;
  background: none;
  border-radius: 0;
}

a {
  color: inherit;
  text-decoration: none;
}

.defs {
  position: absolute;
  width: 0;
  height: 0;
}

/* editor window */
.titlebar {
  display: flex;
  align-items: flex-end;
  flex: none;
  height: 8px;
  padding-left: 4px;
  overflow: hidden;
  background: linear-gradient(90deg, #808080, #b8b8b8);
  border-bottom: 1px solid #d8dcd8;
}

.app-icon {
  width: 14px;
  height: 14px;
  flex: none;
  margin-bottom: 2px;
}

.titlebar-text {
  margin-left: 2px;
  color: #d4d0c8;
  font: bold 11px/13px "Liberation Sans", sans-serif;
  white-space: nowrap;
}

.win-btns {
  margin-left: auto;
  display: flex;
}

.win-btns button {
  width: 16px;
  height: 14px;
  background: #d4d0c8;
  border: 1px solid #404040;
  margin-bottom: 2px;
}

.top {
  display: flex;
  flex: none;
  height: 56px;
  background: #527a7a;
  padding-top: 2px;
}

.menubar {
  width: 1023px;
  display: flex;
  gap: 17px;
  padding: 16px 0 0 11px;
  margin-left: 2px;
  background: #9bdbdb;
  border: 2px solid #d0f4f4;
  border-right-color: #527a7a;
  border-bottom-color: #527a7a;
  box-shadow: 0 1px #d0f4f4;
  font: bold 14px/16px "Liberation Serif", serif;
}

.menubar u {
  text-underline-offset: 3px;
}

.brand {
  flex: 1;
  display: flex;
  margin-left: 3px;
  background: #9bdbdb;
  border-top: 2px solid #d0f4f4;
  border-left: 2px solid #d0f4f4;
  overflow: hidden;
  white-space: nowrap;
}

.brand-logo {
  width: 150px;
  height: 24px;
  flex: none;
  margin: 9px 10px 0 6px;
}

.brand-name {
  font: bold 24px/26px "Liberation Serif", serif;
}

.brand-date {
  margin-left: 8px;
  font: italic bold 15px/18px "Liberation Mono", monospace;
}

.workspace {
  flex: 1;
  display: flex;
  min-height: 0;
}

.sidebar {
  width: 155px;
  display: flex;
  flex-direction: column;
  background: #54cdae;
  border-left: 1px solid #000;
  border-top: 1px solid #000;
  padding: 2px 1px 0 2px;
}

.job-box {
  height: 19px;
  border: 1px solid #000;
  border-bottom-width: 0;
  background: #9bdbdb;
  padding-left: 2px;
  font: bold 15px/19px "Liberation Mono", monospace;
  white-space: nowrap;
  overflow: hidden;
}

.job-box.last {
  height: 20px;
  border-bottom-width: 1px;
}

.matrix-frame {
  margin: 1px 0 2px;
  padding: 1px 2px;
  border: 1px solid #000;
}

.matrix-btn {
  display: block;
  width: 100%;
  height: 23px;
  text-align: left;
  padding-left: 1px;
  background: #9bdbdb;
  border: 2px solid #d0f4f4;
  border-right-color: #4a7e7e;
  border-bottom-color: #4a7e7e;
  font: bold 15px/19px "Liberation Mono", monospace;
}

.layer-area {
  flex: 1;
  margin-left: -2px;
  padding: 1px 0 0 1px;
  border-left: 3px solid #2f7464;
  border-top: 3px solid #2f7464;
  border-right: 1px solid #a8f0dc;
  border-bottom: 1px solid #a8f0dc;
}

.layer-panel {
  width: 123px;
  padding: 1px 2px 10px 1px;
  border: 1px solid #000;
  box-shadow: 1px 1px #a8f0dc;
  display: flex;
  flex-direction: column;
  gap: 3px;
}

.layer-group {
  background: #000;
  padding: 1px 2px;
}

.layer {
  display: grid;
  grid-template-columns: 14px 14px 1fr;
  gap: 2px;
  padding: 1px 0;
}

.layer input {
  appearance: none;
  width: 14px;
  height: 14px;
  background: #fff;
  border: 2px solid #fff;
  box-shadow: inset 0 0 0 2px #000;
}

.layer.active input {
  border-color: #0000a8;
}

.swatch.red {
  background: #f00;
}

.swatch.green {
  background: #469a00;
}

.layer label {
  display: flex;
  align-items: center;
  padding: 0 2px 0 1px;
  height: 14px;
  background: #9bdbdb;
  font-weight: bold;
  line-height: 14px;
}

.layer.active label {
  background: #fff;
}

.layer.mask label {
  background: #02a47c;
}

.layer.signal label {
  background: #fdc44c;
}

.layer.drill label {
  background: #9bb4bc;
}

.layer.rout label {
  background: #d8d8d8;
}

.grid-mark {
  width: 5px;
  height: 5px;
  margin-left: auto;
}

.selected {
  height: 20px;
  margin: 2px 0;
  padding-left: 2px;
  border: 1px solid #000;
  background: #fdc44c;
  font-weight: bold;
  line-height: 17px;
}

.canvas {
  flex: 1;
  display: flex;
  align-items: flex-end;
  justify-content: space-between;
  background: #000;
}

.board {
  width: 565px;
  height: 720px;
  flex: none;
  align-self: flex-start;
}

.silk text {
  font: bold 5px "Liberation Mono", monospace;
  fill: #f00;
}

.silk .b {
  font-size: 7px;
}

.silk .pn {
  font-size: 10px;
  font-weight: normal;
}

.coord-panel {
  width: 144px;
  height: 5px;
  background: #54cdae;
  border-bottom: 2px solid #a8f0dc;
}

.command {
  display: flex;
  flex: none;
  height: 34px;
  padding: 1px 0 1px 1px;
  gap: 2px;
  background: #000;
  font-weight: bold;
}

.cmd-btn {
  width: 31px;
  flex: none;
  display: grid;
  place-items: center;
  background: #ffffcd;
  border: 2px solid #ffffcd;
  box-shadow: inset 0 0 0 1px #a8a884;
}

.cmd-btn svg {
  width: 20px;
  height: 20px;
}

.cmd-btn.framed {
  width: 29px;
  border: 3px solid #54cdae;
  box-shadow: inset 0 0 0 2px #c8c49c;
}

.cmd-btn.framed svg {
  width: 16px;
  height: 16px;
}

.xy {
  width: 47px;
  margin-left: -1px;
  padding-left: 2px;
  background: #ffffcd;
  line-height: 32px;
}

.xy-input {
  width: 171px;
  padding: 0 6px;
  background: #ffffcd;
  border: 3px solid;
  border-color: #a8a078 #d0cc9c #d0cc9c #a8a078;
  outline: 1px solid #ffffcd;
  outline-offset: -1px;
}

.message {
  flex: 1;
  padding-left: 3px;
  background: #ffffcd;
  line-height: 32px;
}

.units {
  width: 58px;
  padding: 2px 0 2px 4px;
  background: #54cdae;
}

.unit-btn {
  display: flex;
  align-items: center;
  width: 100%;
  height: 100%;
  padding-left: 4px;
  border: 2px solid #a8f0dc;
  border-right: 0;
  border-bottom-color: #2f7464;
  font-weight: bold;
}

.unit-btn i {
  width: 8px;
  height: 6px;
  margin-left: 28px;
  border-top: 2px solid #a8f0dc;
  border-left: 2px solid #a8f0dc;
}

.footer {
  flex: none;
  height: 29px;
  padding: 3px 0 0 2px;
  background: #68908f;
}

.footer-inner {
  height: 25px;
  background: #b3ffff;
  border: 3px solid #d4ffff;
  border-bottom: 2px solid #d4ffff;
  border-right: 0;
  box-shadow: inset 0 -1px #68908f;
}

/* floats over the bottom edge of the desktop */
.langbar {
  position: absolute;
  right: 200px;
  bottom: 0;
  width: 105px;
  height: 9px;
  display: flex;
  padding-left: 3px;
  background: #d4d0c8;
  border: 1px solid #707070;
  border-bottom: 0;
}

.langbar svg {
  width: 90px;
  height: 9px;
}

/* word window, lies over the editor */
.word {
  position: absolute;
  top: 31px;
  left: 720px;
  right: 0;
  bottom: 68px;
  display: flex;
  flex-direction: column;
  overflow: hidden;
  padding: 2px 0 2px 2px;
  background: #d4d0c8;
  border: 1px solid #f4f2ee;
  border-right: 0;
  border-bottom-color: #605e5a;
  font: 12px/16px "Liberation Sans", "Noto Sans CJK SC", sans-serif;
  white-space: nowrap;
}

.word-title {
  flex: none;
  display: flex;
  align-items: center;
  gap: 3px;
  height: 18px;
  padding-left: 1px;
  color: #fff;
  background: linear-gradient(90deg, #0a246a, #92b4e2);
  font: bold 12px/18px "Noto Sans", "Noto Sans CJK SC", sans-serif;
}

.word-icon {
  width: 16px;
  height: 16px;
}

.word-menu {
  flex: none;
  display: flex;
  align-items: center;
  gap: 16px;
  height: 23px;
  padding-left: 5px;
  background: linear-gradient(90deg, #dedad2, #f2f1ee);
}

.word-menu .grip {
  margin-right: -10px;
}

.word-menu span, .text-btn span, .mono {
  font: 10px "Liberation Mono", monospace;
}

.grip {
  flex: none;
  width: 4px;
  height: 14px;
  margin-left: 2px;
  background: repeating-linear-gradient(#a8a49c 0 2px, transparent 2px 4px) 0 0 / 2px 100% no-repeat;
}

.tools {
  flex: none;
  display: flex;
  gap: 3px;
  height: 26px;
  padding: 0 0 1px 3px;
  background: linear-gradient(90deg, #dedad2, #f2f1ee);
}

.segment {
  display: flex;
  align-items: center;
  border-radius: 3px 0 0 3px;
  background: linear-gradient(#f8f7f5, #dcd9d2);
}

.segment.grow {
  flex: 1;
}

.segment .grip {
  margin-right: 2px;
}

.blank {
  width: 24px;
}

.tb {
  width: 23px;
  height: 22px;
  flex: none;
  display: grid;
  place-items: center;
}

.tb svg {
  width: 16px;
  height: 16px;
  overflow: visible;
}

.tb.on {
  border: 1px solid #0a246a;
  background: #d2d6e4;
}

.letter {
  font: bold 14px/16px "Liberation Serif", serif;
}

.boxed {
  width: 15px;
  border: 1px solid #5474a4;
  line-height: 14px;
}

.shaded {
  width: 14px;
  background: #b0b0b0;
}

.drop {
  width: 11px;
  height: 22px;
  flex: none;
  display: grid;
  place-items: center;
}

.drop::after {
  content: "";
  border: 3px solid transparent;
  border-top-color: #000;
  border-bottom: 0;
}

.sep {
  flex: none;
  width: 1px;
  height: 16px;
  margin: 0 3px;
  background: #a8a49c;
}

.cap {
  width: 12px;
  align-self: stretch;
  flex: none;
  border-radius: 0 4px 4px 0;
  background: linear-gradient(#b0aeaa, #7c7a76);
}

.cap svg {
  width: 10px;
  height: 22px;
}

.combo {
  appearance: none;
  height: 21px;
  margin-right: 2px;
  padding: 0 18px 0 2px;
  background: #fff url("data:image/svg+xml,%3Csvg xmlns='http://www.w3.org/2000/svg' width='12' height='19'%3E%3Cpath d='M0 0h12v19H0z' fill='%23ece9e4'/%3E%3Cpath d='M3 8h6l-3 3z'/%3E%3C/svg%3E") right 1px center no-repeat;
}

.w-style {
  width: 82px;
  padding-right: 14px;
}

.w-font {
  width: 124px;
  font: 10px "Liberation Mono", monospace;
}

.w-size {
  width: 51px;
}

.w-review {
  width: 127px;
  padding-right: 14px;
}

.text-btn {
  height: 22px;
  padding: 0 0 0 2px;
}

.ico-text {
  font: bold 9px "Liberation Sans", sans-serif;
}

.ruler {
  flex: none;
  display: flex;
  height: 24px;
  margin-left: 1px;
  padding-top: 3px;
  border-top: 2px solid #605e5a;
  border-left: 2px solid #605e5a;
}

.tab-stop {
  flex: none;
  display: grid;
  place-items: center;
  width: 15px;
  height: 15px;
  margin: 0 4px 0 3px;
  border: 1px solid #808080;
  background: #eceae6;
}

.tab-stop svg {
  width: 8px;
  height: 8px;
}

.ruler-scale {
  flex: 1;
  min-width: 0;
  display: flex;
  align-self: flex-start;
  height: 12px;
  margin-top: 2px;
  background: #fff;
}

.ruler-margin {
  width: 23px;
  flex: none;
  background: #808080;
}

.indent {
  width: 9px;
  height: 21px;
  flex: none;
  margin: -4px -5px 0 -4px;
}

.ticks {
  display: flex;
  margin: 0 0 0 15px;
  padding: 0;
  list-style: none;
}

.ticks li {
  width: 28px;
  flex: none;
  text-align: center;
  font: 10px/12px "Liberation Sans", sans-serif;
}

.ticks li::after {
  content: "";
  display: block;
  width: 1px;
  height: 3px;
  margin: 1px auto 0;
  background: #808080;
}

.doc {
  flex: 1;
  min-height: 0;
  margin-left: 1px;
  overflow: hidden;
  border-left: 2px solid #605e5a;
  padding-left: 22px;
  background: linear-gradient(90deg, #d4d0c8 22px, #fff 22px);
  font: 14px/20px "Liberation Serif", "Noto Sans CJK SC", serif;
}

.prev-line {
  height: 5px;
  margin-left: 24px;
  overflow: hidden;
  display: flex;
  align-items: flex-end;
  background: #0f0;
  color: #b050a0;
  line-height: 14px;
}

.page-end, .page-start {
  width: 24px;
  border-right: 1px solid #a0a0a0;
}

.page-end {
  height: 16px;
  margin-top: 4px;
  border-top: 1px solid #a0a0a0;
}

.page-gap {
  height: 15px;
  background: #808080;
  border-top: 3px solid #000;
  border-bottom: 1px solid #000;
}

.page-start {
  height: 21px;
  border-bottom: 1px solid #a0a0a0;
}

.lines {
  display: flex;
  flex-direction: column;
  padding-left: 24px;
  margin-top: 2px;
}

.line {
  flex: none;
  height: 21px;
  margin: 0;
}

.line:nth-child(5n + 1) {
  height: 20px;
}

.line mark {
  display: inline-block;
  height: 20px;
  color: #102010;
  background: #0f0;
}

.line:nth-child(5n + 1) mark {
  height: 19px;
  line-height: 19px;
}

.line b {
  font-weight: normal;
  text-decoration: underline dotted #705070 1px;
  text-underline-offset: 2px;
}

.doc s {
  text-decoration: underline wavy #208020 1px;
  text-underline-offset: 1px;
}

.in-1 {
  padding-left: 21px;
}

.in-2 {
  padding-left: 28px;
}

.line.in-3 {
  padding-left: 40px;
  height: 18px;
  line-height: 18px;
}

.line.in-3 mark {
  height: 18px;
}

.kern {
  font-feature-settings: "halt";
}

.pink {
  color: #d020d0;
}

.red {
  color: #c04000;
}

.blue {
  color: #0040c0;
}

.cjk {
  font-family: "Noto Sans CJK SC", sans-serif;
}

.in-3 .cjk, .comp, .ret {
  line-height: 1;
}

.comp {
  color: #a060a0;
  font: bold 12px/1 "Liberation Mono", monospace;
}

.ret {
  color: #808080;
  font: 11px/1 "DejaVu Sans", sans-serif;
}

.figure {
  width: 526px;
  height: 85px;
  flex: none;
  margin-left: 40px;
}

.f-tp {
  font: 13px "DejaVu Sans Mono", monospace;
  fill: #b080d0;
}

.f-gnd {
  font: 15px "DejaVu Sans Mono", monospace;
  fill: #d8c850;
}

.f-pn {
  font: 22px "Liberation Mono", monospace;
  fill: #c03c4c;
}

.hscroll {
  flex: none;
  display: flex;
  align-items: center;
  height: 17px;
  margin-left: 1px;
  border-left: 2px solid #605e5a;
  border-bottom: 1px solid #808080;
}

.hscroll button {
  width: 16px;
  height: 16px;
  flex: none;
  display: grid;
  place-items: center;
}

.hscroll svg {
  width: 12px;
  height: 12px;
}

.hscroll .on {
  border: 1px solid #0a246a;
  background: #d2d6e4;
}

.hscroll .raised, .thumb {
  border: 1px solid #fff;
  border-right-color: #404040;
  border-bottom-color: #404040;
}

.track {
  width: 73px;
  align-self: stretch;
  background: repeating-conic-gradient(#fff 0 25%, #d4d0c8 0 50%) 0 0 / 2px 2px;
}

.thumb {
  flex: 1;
  align-self: stretch;
  border-right: 0;
}

.draw {
  height: 26px;
  border-top: 1px solid #fff;
}

.draw .text-btn {
  padding-right: 1px;
}

.fontcolor span {
  width: 16px;
  border-bottom: 4px solid #000;
  color: #2c4c8c;
  font: bold 15px/13px "Liberation Serif", serif;
}

.status {
  flex: none;
  display: flex;
  gap: 5px;
  height: 22px;
  padding: 2px 0 1px 5px;
  border-top: 1px solid #808080;
}

.cell {
  flex: none;
  display: flex;
  align-items: center;
  padding: 0 3px;
  border: 1px solid #e0dcd4;
}

.off {
  color: #8c8880;
}

.pages {
  width: 197px;
  gap: 38px;
  padding-left: 42px;
}

.pages span:last-child {
  margin-left: -10px;
}

.place {
  width: 225px;
}

.place .row {
  margin: 0 32px 0 auto;
}

.book {
  width: 43px;
  justify-content: center;
}

.book svg {
  width: 20px;
  height: 14px;
}

.rest {
  flex: 1;
}
```
